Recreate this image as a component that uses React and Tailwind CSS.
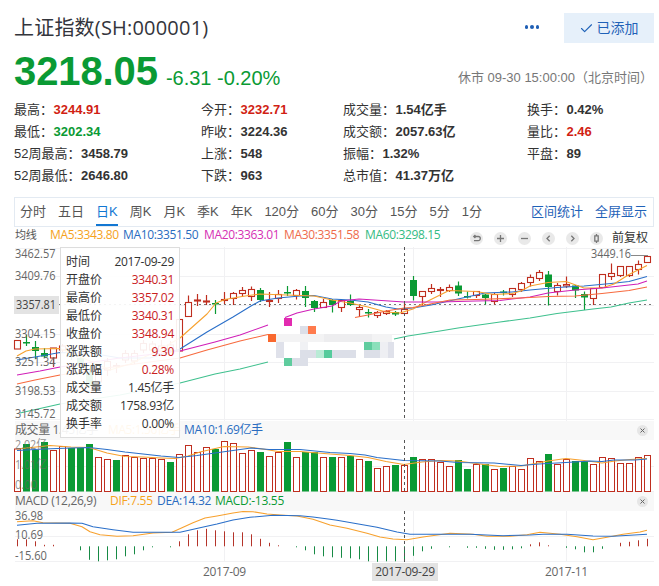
import { Check } from "lucide-react";

const RED = "#bf2e1f";
const GREEN = "#0a9a34";

const stats = [
  [
    { label: "最高", value: "3244.91", color: "text-[#d11f14]" },
    { label: "最低", value: "3202.34", color: "text-[#0a9a34]" },
    { label: "52周最高", value: "3458.79" },
    { label: "52周最低", value: "2646.80" },
  ],
  [
    { label: "今开", value: "3232.71", color: "text-[#d11f14]" },
    { label: "昨收", value: "3224.36" },
    { label: "上涨", value: "548" },
    { label: "下跌", value: "963" },
  ],
  [
    { label: "成交量", value: "1.54亿手" },
    { label: "成交额", value: "2057.63亿" },
    { label: "振幅", value: "1.32%" },
    { label: "总市值", value: "41.37万亿" },
  ],
  [
    { label: "换手", value: "0.42%" },
    { label: "量比", value: "2.46", color: "text-[#d11f14]" },
    { label: "平盘", value: "89" },
  ],
];

const tabs = ["分时", "五日", "日K", "周K", "月K", "季K", "年K", "120分", "60分", "30分", "15分", "5分", "1分"];

const detail = [
  ["时间", "2017-09-29", "text-[#333]"],
  ["开盘价", "3340.31", "text-[#c9211e]"],
  ["最高价", "3357.02", "text-[#c9211e]"],
  ["最低价", "3340.31", "text-[#c9211e]"],
  ["收盘价", "3348.94", "text-[#c9211e]"],
  ["涨跌额", "9.30", "text-[#c9211e]"],
  ["涨跌幅", "0.28%", "text-[#c9211e]"],
  ["成交量", "1.45亿手", "text-[#333]"],
  ["成交额", "1758.93亿", "text-[#333]"],
  ["换手率", "0.00%", "text-[#333]"],
];

// [index, up, bodyTop, bodyBottom, wickTop, wickBottom]
const candles = [
  [0, 1, 340.5, 349, 340, 349], [1, 0, 342, 343.5, 335, 346], [2, 0, 347, 351, 341, 359], [3, 0, 353, 356.5, 348, 358],
  [4, 1, 348, 358, 348, 367], [5, 1, 346, 350, 344, 353], [6, 0, 350, 356, 346, 360], [7, 0, 358, 366, 356, 370],
  [8, 0, 372, 386, 368, 388], [9, 1, 374, 382, 370, 385], [10, 1, 361.5, 370, 358, 376], [11, 1, 365.5, 366.5, 363, 373],
  [12, 1, 353.5, 360, 350, 363], [13, 1, 353.5, 361, 350, 364], [14, 1, 343.5, 350, 340, 353], [15, 1, 344, 350, 341, 354],
  [16, 1, 346, 351, 340, 353], [17, 1, 345, 350, 341, 353], [18, 1, 319.5, 351, 319, 351], [19, 1, 302.5, 316.5, 295.5, 316],
  [20, 1, 300, 301, 294, 306], [21, 1, 301, 302, 295, 305], [22, 0, 303, 304.5, 300, 314], [23, 1, 299.5, 300.5, 292, 304],
  [24, 1, 293.5, 298.5, 292, 305], [25, 1, 290.5, 293.5, 287, 297], [26, 1, 289.5, 296.5, 286.5, 301], [27, 0, 290, 300, 288, 302],
  [28, 1, 300.5, 301.5, 292, 307], [29, 1, 294.5, 298.5, 290, 303], [30, 0, 292, 293.5, 286, 296], [31, 1, 290.5, 295.5, 289, 299.5],
  [32, 0, 291, 298, 286, 307], [33, 0, 301, 308, 300, 312], [34, 1, 302.5, 307.5, 299, 307], [35, 0, 300, 305, 299, 312.5],
  [36, 1, 300.5, 307.5, 300, 312], [37, 0, 301, 305, 294.5, 306], [38, 1, 307.5, 309.5, 305, 317], [39, 0, 312, 313.5, 309, 317.5],
  [40, 1, 312.5, 315.5, 311, 318], [41, 1, 311.5, 313.5, 310, 315], [42, 0, 312, 314.5, 311, 316], [43, 1, 309.5, 313.5, 303, 314],
  [44, 0, 280, 296, 276, 300.5], [45, 1, 291.5, 296.5, 291, 305], [46, 1, 288.5, 291.5, 284, 294], [47, 1, 289.5, 290.5, 287, 297],
  [48, 1, 287.5, 290.5, 284.5, 292], [49, 0, 285.5, 293.5, 281.5, 296], [50, 0, 296, 297.5, 291.5, 298.5], [51, 1, 291.5, 295.5, 291, 298],
  [52, 0, 294.5, 298, 294, 304.5], [53, 1, 294.5, 301.5, 293, 304.5], [54, 0, 291.5, 293, 290, 295.5], [55, 1, 288.5, 294.5, 288, 297],
  [56, 1, 283.5, 289.5, 282, 292], [57, 1, 277.5, 282.5, 274.5, 286.5], [58, 1, 272.5, 278.5, 270, 281], [59, 0, 274.5, 287, 271, 305.5],
  [60, 1, 285.5, 291.5, 283, 295.5], [61, 1, 284.5, 286, 276.5, 288], [62, 0, 285.5, 290.5, 285, 298], [63, 0, 294, 297.5, 291.5, 310],
  [64, 1, 288.5, 298.5, 288, 305], [65, 1, 274.5, 287.5, 274, 287], [66, 1, 273.5, 276.5, 263.5, 280], [67, 1, 266.5, 275.5, 266, 277],
  [68, 1, 266.5, 275.5, 266, 277], [69, 1, 264.5, 269.5, 260.5, 274.5], [70, 1, 256.5, 262.5, 256, 262],
];

const volumes = [
  449, 444, 450, 442, 450.5, 446.5, 448, 448, 444, 457.5, 459.5, 460, 455.5, 457.5, 458.5, 458.5, 459.5, 462,
  454.5, 445.5, 452.5, 447.5, 449, 441.5, 443.5, 453.5, 450.5, 452, 456.5, 452.5, 442, 457.5, 452, 452, 457.5,
  457, 457.5, 456, 459.5, 461, 468.5, 466.5, 465, 465.5, 457, 459.5, 459.5, 462.5, 466.5, 460, 469, 464.5, 464,
  469.5, 468, 466.5, 469.5, 458.5, 461.5, 454, 464.5, 459.5, 461, 461, 464.5, 457.5, 458.5, 463.5, 463.5, 457.5, 455.5,
];
const volumeDown = [1, 2, 3, 6, 7, 8, 11, 17, 22, 27, 30, 32, 33, 35, 37, 39, 42, 44, 49, 50, 52, 54, 59, 62, 63];

// positive above the zero line, negative below it
const macd = [
  7, 7, 5, 1.5, 1.5, 0, 0, -4, -13.5, -15, -14, -13, -10, -8, -4, -1, 0, -1, 5, 12, 16, 17.5, 16, 15, 14, 14, 12, 7.5,
  3.5, 1, 0, -1, -4, -8, -10, -11, -11.5, -12, -13, -15, -15.5, -15, -15, -15.5, -9.5, -5, -2.5, 0, -1, 0, -1.5, -1.5,
  -2.5, -3.5, -3.5, -3, -2, 2, 4, 1, 0, -1.5, -3, -6, -6, -2.5, 0, 3.5, 4.5, 6, 7.5,
];

const priceLines = [
  ["#2a6fc9", "17,360 35,357 60,352.5 90,353 120,358 150,358 180,349 207,332 233,317 251,306 260,301 278,298 300,296 314,295.5 332,299 350,300 368,302 386,307 398,309 413,308 431,305 458,299 485,293 512,292 530,290 557,287.5 584,286 611,283.5 629,281.5 638,279 647,276.5"],
  ["#f7a12e", "17,356 26,351 35,349 60,348.5 90,361 110,370 130,364 155,352 180,338 207,314 216,303 225,299.5 242,296.5 260,294 300,295.5 314,296 332,300 350,303 368,307 386,312 400,313 413,309 422,304 440,295 449,290.5 476,291.5 494,294.5 512,293.5 521,291 530,286 548,282.5 566,281.5 584,288 602,288 614,284 629,274.5 647,265.5"],
  ["#d01fb8", "17,375 40,371 60,367 120,358 180,351 215,342 240,335 268,325"],
  ["#d01fb8", "285,317.5 297,313 314,309 332,306 341,301 359,299 404,302 440,302 476,301 500,300.5 512,299 530,297 548,293 575,290 602,288 629,285 638,284 647,281"],
  ["#f76a3e", "17,384 35,380 60,375 120,366 180,358 207,350 240,341 268,334.5"],
  ["#f76a3e", "355,317.5 368,315 386,311 404,308 413,307.5 450,300 476,299.5 520,298 548,296.5 575,296 602,293.5 629,290.5 647,287"],
  ["#3fc08e", "20,413 60,404 120,395 180,383 215,374 240,369 268,362"],
  ["#3fc08e", "394,339 408,336 440,331 458,328 500,322 530,318 557,313.5 593,309 611,307 629,303 647,300"],
];

const volumeLines = [
  ["#f7a12e", "17,449 36,447 50,445.5 71,447 89,447.5 107,453 125,456.5 143,457 161,458 175,458.5 188,456 200,452 224,446.5 248,447 266,449.5 278,451.5 300,451.5 330,454 350,455.5 368,457.5 386,461.5 404,464.5 422,462 440,460.5 458,461 480,464 500,466.5 521,466 535,463.5 548,461 566,458.5 584,460.5 602,463 615,461 630,459.5 647,458.5"],
  ["#2a6fc9", "17,450.5 44,449 71,448 89,447.5 107,449.5 125,452 143,454 161,456 179,457.5 197,455.5 215,453 233,450.5 251,448 269,449.5 300,449.5 330,452.5 350,453.5 365,455 377,457.5 404,460.5 440,461 458,462.5 494,463 521,465.5 539,464 566,462.5 590,461 602,461.5 614,460 635,460 647,459"],
];

const macdLines = [
  ["#f7a12e", "17,521.7 33,520.7 43,522.7 70,523.3 82,526.7 90,531.7 100,534.7 117,536.3 133,535.7 153,533 172,532.3 182,527.7 193,522.7 205,518 217,516 233,513 243,511.5 253,511.7 267,514 280,515 297,516 313,519.3 330,525 347,528.3 367,533.3 380,537 393,539 407,539.7 423,537 450,533.3 473,534.3 487,536.3 510,536.3 527,534.7 540,532.3 560,534.3 577,536.7 593,539.7 607,537.3 623,534.3 640,532 647,530.3"],
  ["#2a6fc9", "17,525.3 37,523.3 70,523 82,523.3 93,526.7 113,529.7 133,532.3 180,532.3 200,527.7 217,524 233,520 250,517.3 273,515.3 300,515.7 313,517 330,519.3 337,520.3 357,523.7 377,527.3 397,532 410,534.3 470,534.3 503,535.7 530,535 543,534.3 567,534.3 593,536 613,536.3 647,534.3"],
];

// pixelated patch over the price lines
const mosaic = [
  [284, 318, 8, "#e22bb0"], [300, 326, 8, "#dcdfe8"], [308, 326, 8, "#ff7b4d"], [268, 334, 8, "#f9682e"],
  [276, 334, 48, "#f3f3f4"], [324, 334, 48, "#ededef"], [372, 334, 20, "#f3f3f4"], [276, 342, 8, "#dfe1ea"],
  [300, 342, 8, "#f0f1f4"], [364, 342, 8, "#5fcc9e"], [372, 342, 8, "#8be0bb"], [380, 342, 8, "#eeeff3"],
  [388, 342, 6, "#dfe1ea"], [276, 350, 8, "#dfe1ea"], [300, 350, 16, "#dcdfe8"], [316, 350, 8, "#b9ebd6"],
  [324, 350, 8, "#55cb9c"], [332, 350, 24, "#dcdfe8"], [364, 350, 16, "#dcdfe8"], [380, 350, 8, "#eeeff3"],
  [388, 350, 6, "#dfe1ea"], [284, 358, 8, "#5fcc9e"], [292, 358, 16, "#dcdfe8"],
];

const cx = (i) => 17.5 + i * 9;

function Label({ x = 15, y, width, children, fill = "#666" }) {
  return (
    <text x={x} y={y + 4.2} fill={fill} fontSize="12" textLength={width} lengthAdjust="spacingAndGlyphs">
      {children}
    </text>
  );
}

function Grid({ top, bottom, rows }) {
  return (
    <g stroke="#f1f1f3" strokeWidth="1">
      {rows.map((y) => (
        <line key={y} x1="15" x2="654" y1={y} y2={y} />
      ))}
      {[224.5, 413.5, 566.5].map((x) => (
        <line key={x} x1={x} x2={x} y1={top} y2={bottom} />
      ))}
    </g>
  );
}

function Lines({ data }) {
  return data.map(([color, points]) => (
    <polyline key={points} points={points} fill="none" stroke={color} strokeWidth="1.1" strokeLinejoin="round" />
  ));
}

function Crosshair({ top, bottom }) {
  return <line x1="404.5" x2="404.5" y1={top} y2={bottom} stroke="#555" strokeWidth="1" strokeDasharray="3 3" />;
}

function PriceChart() {
  return (
    <svg viewBox="0 247 659 174" width="659" height="174" className="block overflow-visible">
      <Grid top={247} bottom={421} rows={[248.5, 276.5, 305.5, 334.5, 362.5, 391.5, 419.5]} />
      <line x1="59" x2="654" y1="304.5" y2="304.5" stroke="#777" strokeWidth="1.2" strokeDasharray="2 3" />
      {candles.map(([i, up, top, bottom, high, low]) => {
        const x = cx(i);
        const color = up ? RED : GREEN;
        return (
          <g key={i}>
            <line x1={x} x2={x} y1={high} y2={low} stroke={color} strokeWidth="1.2" />
            {up ? (
              <rect x={x - 3} y={top} width="6" height={bottom - top} fill="#fff" stroke={color} strokeWidth="1.1" />
            ) : (
              <rect x={x - 3.5} y={top} width="7" height={bottom - top} fill={color} />
            )}
          </g>
        );
      })}
      <Lines data={priceLines} />
      {mosaic.map(([x, y, w, color]) => (
        <rect key={`${x}-${y}`} x={x} y={y} width={w} height="8" fill={color} />
      ))}
      <Crosshair top={247} bottom={421} />
      <line x1="631" x2="648" y1="255.5" y2="255.5" stroke="#888" />
      <Label x={591} y={254} width={40}>3449.16</Label>
      <Label y={253.5} width={40.5}>3462.57</Label>
      <Label y={275.5} width={40.5}>3409.76</Label>
      <rect x="14" y="296" width="45" height="18" fill="#e3e3e3" />
      <Label x={16} y={304.5} width={40} fill="#444">3357.81</Label>
      <Label y={333.5} width={40.5}>3304.15</Label>
      <Label y={361.5} width={40.5}>3251.34</Label>
      <Label y={390.5} width={40.5}>3198.53</Label>
      <Label y={414} width={40.5}>3145.72</Label>
    </svg>
  );
}

function VolumeChart() {
  return (
    <svg viewBox="0 440 659 52" width="659" height="52" className="block overflow-visible">
      <Grid top={440} bottom={492} rows={[466.5, 491.5]} />
      {volumes.map((top, i) =>
        volumeDown.includes(i) ? (
          <rect key={i} x={cx(i) - 3.5} y={top} width="7" height={491.5 - top} fill={GREEN} />
        ) : (
          <rect key={i} x={cx(i) - 3} y={top} width="6" height={491.5 - top} fill="#fff" stroke={RED} />
        )
      )}
      <Lines data={volumeLines} />
      <Crosshair top={440} bottom={492} />
      <g opacity="0.7">
        <Label y={445} width={32}>2.02亿</Label>
        <Label y={464.5} width={32}>1.01亿</Label>
        <Label y={485} width={22}>0.00</Label>
      </g>
    </svg>
  );
}

function MacdChart() {
  return (
    <svg viewBox="0 511 659 52" width="659" height="52" className="block overflow-visible">
      <Grid top={511} bottom={562} rows={[536.5, 561.5]} />
      {macd.map((v, i) =>
        v === 0 ? null : (
          <line key={i} x1={cx(i)} x2={cx(i)} y1="546.3" y2={546.3 - v} stroke={v > 0 ? "#b5342a" : "#178a45"} />
        )
      )}
      <Lines data={macdLines} />
      <Crosshair top={511} bottom={562} />
      <Label y={516} width={28}>36.98</Label>
      <Label y={535} width={28}>10.69</Label>
      <Label y={556} width={32}>-15.60</Label>
    </svg>
  );
}

const toolIcons = [
  "M4 4.5h4.2a1.8 1.8 0 0 1 0 4.2H4M5.4 3L3.8 4.5l1.6 1.5",
  "M3 6.5h7M6.5 3v7",
  "M3 6.5h7",
  "M7.7 3.8L5 6.5l2.7 2.7",
  "M5.3 3.8L8 6.5 5.3 9.2",
  "M4.8 3.8h3.4v5.4H4.8zM6.5 2v1.8M6.5 9.2V11",
];

function CloseButton() {
  return (
    <button className="flex size-[11px] items-center justify-center rounded-full bg-[#e6e6e6]">
      <svg width="5" height="5" viewBox="0 0 5 5" stroke="#666" strokeWidth="1">
        <path d="M0.5 0.5l4 4M4.5 0.5l-4 4" />
      </svg>
    </button>
  );
}

export default function App() {
  return (
    <div className="h-[586px] w-[659px] overflow-hidden bg-white font-['Liberation_Sans','Noto_Sans_CJK_SC',sans-serif] text-[#333]">
      <header className="flex h-[44px] items-center justify-between pt-3 pr-[5px] pl-[14px]">
        <h1 className="font-['Open_Sans','Noto_Sans_CJK_SC',sans-serif] text-[20px] leading-none tracking-[0.2px] text-[#33353c]">
          上证指数(SH:000001)
        </h1>
        <div className="flex items-center">
          <div className="mr-[25px] mb-[2px] flex gap-[2px]">
            <span className="size-[3.5px] rounded-full bg-[#1f5fb5]" />
            <span className="size-[3.5px] rounded-full bg-[#1f5fb5]" />
            <span className="size-[3.5px] rounded-full bg-[#1f5fb5]" />
          </div>
          <button className="flex h-[30px] w-[90px] items-center justify-center gap-[3px] bg-[#e6f0fa] pr-px text-sm text-[#1f62b8]">
            <Check size={15} strokeWidth={1.8} />
            已添加
          </button>
        </div>
      </header>

      <div className="flex h-[55px] items-center justify-between pr-[6px] pl-[14px]">
        <div className="flex items-baseline gap-[8px] text-[#0a9a34]">
          <span className="text-[40px] leading-none font-bold tracking-[-0.1px]">3218.05</span>
          <span className="text-[20px]">-6.31 -0.20%</span>
        </div>
        <span className="pt-3 text-[13px] text-[#777]">休市 09-30 15:00:00（北京时间）</span>
      </div>

      <div className="grid h-[98px] grid-cols-[187px_142px_184px_1fr] pl-[14px] text-[13px]">
        {stats.map((column, i) => (
          <div key={i}>
            {column.map(({ label, value, color = "text-[#333]" }) => (
              <div key={label} className="flex h-[22px] items-center">
                <span>{label}：</span>
                <span className={`pl-[0.5px] font-bold ${color}`}>{value}</span>
              </div>
            ))}
          </div>
        ))}
      </div>

      <nav className="mr-[5px] ml-[14px] flex h-[30px] justify-between border border-[#e3eaf2] pr-[6px] pl-[5px] text-[13px] text-[#555]">
        <div className="flex gap-3">
          {tabs.map((tab) => (
            <button
              key={tab}
              className={`h-[28px] border-b-2 pt-[2px] ${
                tab === "日K" ? "border-[#1277d3] text-[#1277d3]" : "border-transparent"
              }`}
            >
              {tab}
            </button>
          ))}
        </div>
        <div className="flex gap-3 text-[#1f62b8]">
          <button>区间统计</button>
          <button>全屏显示</button>
        </div>
      </nav>

      <section className="relative font-['Open_Sans','Noto_Sans_CJK_SC',sans-serif] text-xs">
        <div className="flex h-[20px] items-start justify-between pr-[11px] pl-[15px]">
          <div className="flex leading-[16px] tracking-[-0.35px]">
            <span className="w-[35px] text-[11px] text-[#555]">均线</span>
            <span className="w-[73px] text-[#f5a21b]">MA5:3343.80</span>
            <span className="w-[81px] text-[#2a6cc0]">MA10:3351.50</span>
            <span className="w-[80px] text-[#d530b4]">MA20:3363.01</span>
            <span className="w-[81px] text-[#ee6a4c]">MA30:3351.58</span>
            <span className="text-[#33bb83]">MA60:3298.15</span>
          </div>
          <div className="flex items-center pt-[3px]">
            <div className="mr-[9px] flex gap-[11px]">
              {toolIcons.map((d) => (
                <svg key={d} width="13" height="13" viewBox="0 0 13 13" fill="none" stroke="#777" strokeWidth="1.3">
                  <circle cx="6.5" cy="6.5" r="6.5" fill="#e9e9e9" stroke="none" />
                  <path d={d} />
                </svg>
              ))}
            </div>
            <span className="leading-[16px]">前复权</span>
          </div>
        </div>

        <PriceChart />

        <div className="mr-[5px] ml-[15px] flex h-[19px] items-center justify-between bg-[#f8f8f8] pr-[6px] tracking-[-0.4px]">
          <div className="flex pb-[2px] leading-[17px]">
            <span className="w-[93px] text-[#666]">成交量 1.45亿手</span>
            <span className="w-[76px] text-[#f5a21b]">MA5:1.56亿手</span>
            <span className="text-[#2a6cc0]">MA10:1.69亿手</span>
          </div>
          <CloseButton />
        </div>
        <VolumeChart />
        <div className="mr-[5px] ml-[15px] flex h-[19px] items-center justify-between bg-[#f8f8f8] pr-[6px] tracking-[-0.3px]">
          <div className="flex pb-[2px] leading-[17px]">
            <span className="w-[95px] text-[#666]">MACD (12,26,9)</span>
            <span className="w-[47px] text-[#f5a21b]">DIF:7.55</span>
            <span className="w-[58px] text-[#2a6cc0]">DEA:14.32</span>
            <span className="text-[#0a9a34]">MACD:-13.55</span>
          </div>
          <CloseButton />
        </div>
        <MacdChart />

        <div className="flex h-[18px] items-center pl-[203px] tracking-[-0.3px] text-[#666]">
          <span className="w-[169px]">2017-09</span>
          <span className="h-[18px] w-[66px] bg-[#e3e3e3] text-center leading-[17px] text-[#444]">2017-09-29</span>
          <span className="ml-[107px]">2017-11</span>
        </div>

        <div className="absolute top-[20px] left-[60px] w-[120px] border border-[#ddd] bg-white/92 pt-[5px] pr-[5px] pb-[4px] pl-[5px]">
          {detail.map(([name, value, color]) => (
            <div key={name} className="flex h-[18px] items-center justify-between">
              <span>{name}</span>
              <span className={`tracking-[-0.3px] ${color}`}>{value}</span>
            </div>
          ))}
        </div>
      </section>
    </div>
  );
}
